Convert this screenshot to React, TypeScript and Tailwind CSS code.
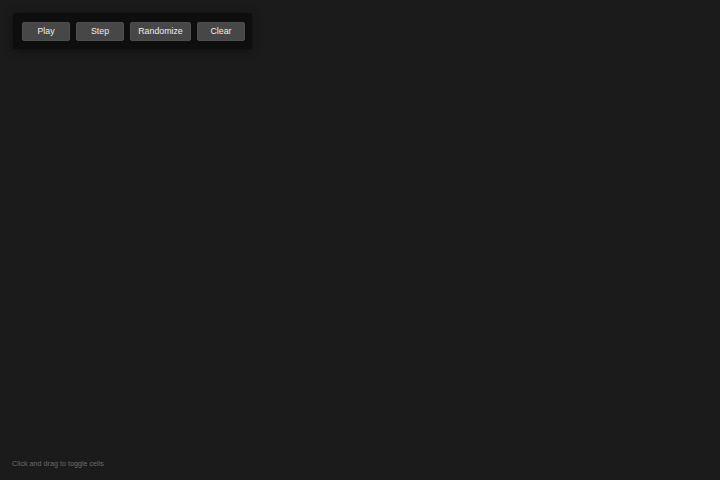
import React from "react";

const buttons = [
  { label: "Play", w: "w-[48px]" },
  { label: "Step", w: "w-[48px]" },
  { label: "Randomize", w: "w-[61px]" },
  { label: "Clear", w: "w-[48px]" },
];

export default function App() {
  return (
    <div
      className="relative w-[720px] h-[480px] overflow-hidden bg-[#1b1b1b]"
      style={{ fontFamily: '"Liberation Sans", Arial, sans-serif' }}
    >
      {/* grid canvas */}
      <canvas className="absolute inset-0 w-full h-full" width={720} height={480} />

      {/* control panel over the canvas */}
      <div className="absolute left-[13px] top-[13px] flex gap-[6px] pl-[9px] pr-[7px] pt-[9px] pb-[8px] bg-[#0e0e0e] rounded-[2px] shadow-[0_2px_10px_rgba(0,0,0,0.45)]">
        {buttons.map((b) => (
          <button
            key={b.label}
            className={`${b.w} h-[19px] flex items-center justify-center rounded-[2px] border border-[#4e4e4e] bg-[#474747] text-[#eeeeee] text-[8.8px] leading-none`}
          >
            {b.label}
          </button>
        ))}
      </div>

      <div className="absolute left-[12px] top-[459px] text-[7.2px] leading-[9px] text-[#6b6b6b]">
        Click and drag to toggle cells
      </div>
    </div>
  );
}
